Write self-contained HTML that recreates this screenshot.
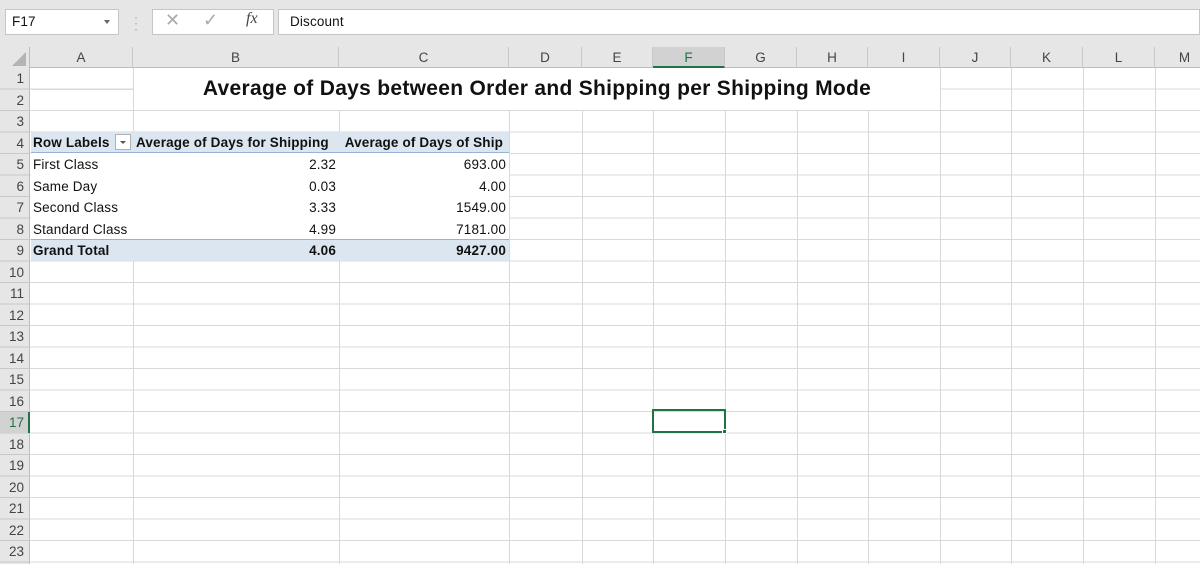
<!DOCTYPE html>
<html><head><style>
body{margin:0;width:1200px;height:564px;overflow:hidden;background:#fff;font-family:"Liberation Sans",sans-serif;position:relative}
div{position:absolute;box-sizing:border-box}
.t{font-size:13.5px;color:#111;line-height:21px;white-space:nowrap;letter-spacing:0.15px}
.r{text-align:right}
.b{font-weight:bold}
.rh{left:0;width:30px;text-align:right;padding-right:6px;font-size:13.5px;color:#444;line-height:21px}
.ch{top:47px;height:21px;text-align:center;font-size:13.5px;color:#444;line-height:21px;border-right:1px solid #c8c8c8}
.v{top:68px;height:496px;width:1px;background:#d9d9d9}
</style></head><body>
<div style="left:0;top:0;width:1200px;height:47px;background:#e6e6e6"></div>
<div style="left:5px;top:9px;width:114px;height:26px;background:#fff;border:1px solid #c6c6c6"></div>
<div class="t" style="left:12px;top:11px;font-size:13.5px">F17</div>
<div style="left:104px;top:20px;width:0;height:0;border-left:3px solid transparent;border-right:3px solid transparent;border-top:4px solid #666"></div>
<div style="left:134px;top:14px;color:#999;font-size:12px;line-height:6px">·<br>·<br>·</div>
<div style="left:152px;top:9px;width:122px;height:26px;background:#fff;border:1px solid #c6c6c6"></div>
<div style="left:165px;top:10px;color:#aaa;font-size:18px">✕</div>
<div style="left:203px;top:10px;color:#aaa;font-size:18px">✓</div>
<div style="left:246px;top:10px;color:#444;font-size:16px;font-style:italic;font-family:'Liberation Serif',serif">fx</div>
<div style="left:278px;top:9px;width:922px;height:26px;background:#fff;border:1px solid #c6c6c6"></div>
<div class="t" style="left:290px;top:11px">Discount</div>
<div style="left:0;top:47px;width:1200px;height:21px;background:#e6e6e6;border-bottom:1px solid #bdbdbd"></div>
<div style="left:0;top:47px;width:30px;height:517px;background:#e6e6e6;border-right:1px solid #bdbdbd"></div>
<div style="left:12px;top:52px;width:0;height:0;border-left:14px solid transparent;border-bottom:14px solid #b4b4b4"></div>
<div class="ch" style="left:30px;width:103px">A</div>
<div class="ch" style="left:133px;width:206px">B</div>
<div class="ch" style="left:339px;width:170px">C</div>
<div class="ch" style="left:509px;width:73px">D</div>
<div class="ch" style="left:582px;width:71px">E</div>
<div class="ch" style="left:653px;width:72px;background:#d2d2d2;border-bottom:2px solid #217346;color:#217346">F</div>
<div class="ch" style="left:725px;width:72px">G</div>
<div class="ch" style="left:797px;width:71px">H</div>
<div class="ch" style="left:868px;width:72px">I</div>
<div class="ch" style="left:940px;width:71px">J</div>
<div class="ch" style="left:1011px;width:72px">K</div>
<div class="ch" style="left:1083px;width:72px">L</div>
<div class="ch" style="left:1155px;width:60px">M</div>
<div style="left:30px;top:68px;width:1170px;height:496px;background:repeating-linear-gradient(to bottom,transparent 0 20.5px,#d9d9d9 20.5px 21.5px)"></div>
<div class="v" style="left:133px"></div><div class="v" style="left:339px"></div><div class="v" style="left:509px"></div><div class="v" style="left:582px"></div><div class="v" style="left:653px"></div><div class="v" style="left:725px"></div><div class="v" style="left:797px"></div><div class="v" style="left:868px"></div><div class="v" style="left:940px"></div><div class="v" style="left:1011px"></div><div class="v" style="left:1083px"></div><div class="v" style="left:1155px"></div>
<div style="left:0;top:68px;width:30px;height:496px;background:repeating-linear-gradient(to bottom,transparent 0 20.5px,#c8c8c8 20.5px 21.5px)"></div>
<div style="left:0;top:411.5px;width:30px;height:21.5px;background:#d2d2d2;border-right:2px solid #217346"></div>
<div class="rh" style="top:68px">1</div><div class="rh" style="top:89.5px">2</div><div class="rh" style="top:111px">3</div><div class="rh" style="top:132.5px">4</div><div class="rh" style="top:154px">5</div><div class="rh" style="top:175.5px">6</div><div class="rh" style="top:197px">7</div><div class="rh" style="top:218.5px">8</div><div class="rh" style="top:240px">9</div><div class="rh" style="top:261.5px">10</div><div class="rh" style="top:283px">11</div><div class="rh" style="top:304.5px">12</div><div class="rh" style="top:326px">13</div><div class="rh" style="top:347.5px">14</div><div class="rh" style="top:369px">15</div><div class="rh" style="top:390.5px">16</div><div class="rh" style="top:412px;color:#217346">17</div><div class="rh" style="top:433.5px">18</div><div class="rh" style="top:455px">19</div><div class="rh" style="top:476.5px">20</div><div class="rh" style="top:498px">21</div><div class="rh" style="top:519.5px">22</div><div class="rh" style="top:541px">23</div>
<div style="left:134px;top:68px;width:806px;height:42px;background:#fff"></div>
<div style="left:31px;top:88.5px;width:102px;height:1px;background:#d9d9d9"></div>
<div style="left:134px;top:76px;width:806px;text-align:center;font-size:21px;font-weight:bold;line-height:26px;color:#111;letter-spacing:0.3px">Average of Days between Order and Shipping per Shipping Mode</div>
<div style="left:31px;top:132px;width:478px;height:21px;background:#dce6f1;border-bottom:1px solid #95b3d7"></div>
<div style="left:31px;top:153px;width:478px;height:86px;background:#fff"></div>
<div style="left:31px;top:239px;width:478px;height:22px;background:#dce6f1;border-top:1px solid #95b3d7"></div>
<div class="t b" style="left:33px;top:132px">Row Labels</div>
<div style="left:115px;top:134px;width:16px;height:16px;background:#fff;border:1px solid #b0b0b0"></div>
<div style="left:120px;top:141px;width:0;height:0;border-left:3px solid transparent;border-right:3px solid transparent;border-top:3px solid #555"></div>
<div class="t b" style="left:136px;top:132px">Average of Days for Shipping</div>
<div class="t b r" style="left:339px;top:132px;width:164px">Average of Days of Ship</div>
<div class="t" style="left:33px;top:154px">First Class</div><div class="t r" style="left:133px;top:154px;width:203px">2.32</div><div class="t r" style="left:339px;top:154px;width:167px">693.00</div>
<div class="t" style="left:33px;top:175.5px">Same Day</div><div class="t r" style="left:133px;top:175.5px;width:203px">0.03</div><div class="t r" style="left:339px;top:175.5px;width:167px">4.00</div>
<div class="t" style="left:33px;top:197px">Second Class</div><div class="t r" style="left:133px;top:197px;width:203px">3.33</div><div class="t r" style="left:339px;top:197px;width:167px">1549.00</div>
<div class="t" style="left:33px;top:218.5px">Standard Class</div><div class="t r" style="left:133px;top:218.5px;width:203px">4.99</div><div class="t r" style="left:339px;top:218.5px;width:167px">7181.00</div>
<div class="t b" style="left:33px;top:240px">Grand Total</div><div class="t b r" style="left:133px;top:240px;width:203px">4.06</div><div class="t b r" style="left:339px;top:240px;width:167px">9427.00</div>
<div style="left:652px;top:409px;width:74px;height:24px;border:2px solid #217346"></div>
<div style="left:722px;top:429px;width:5px;height:5px;background:#217346;border:1px solid #fff"></div>
</body></html>
